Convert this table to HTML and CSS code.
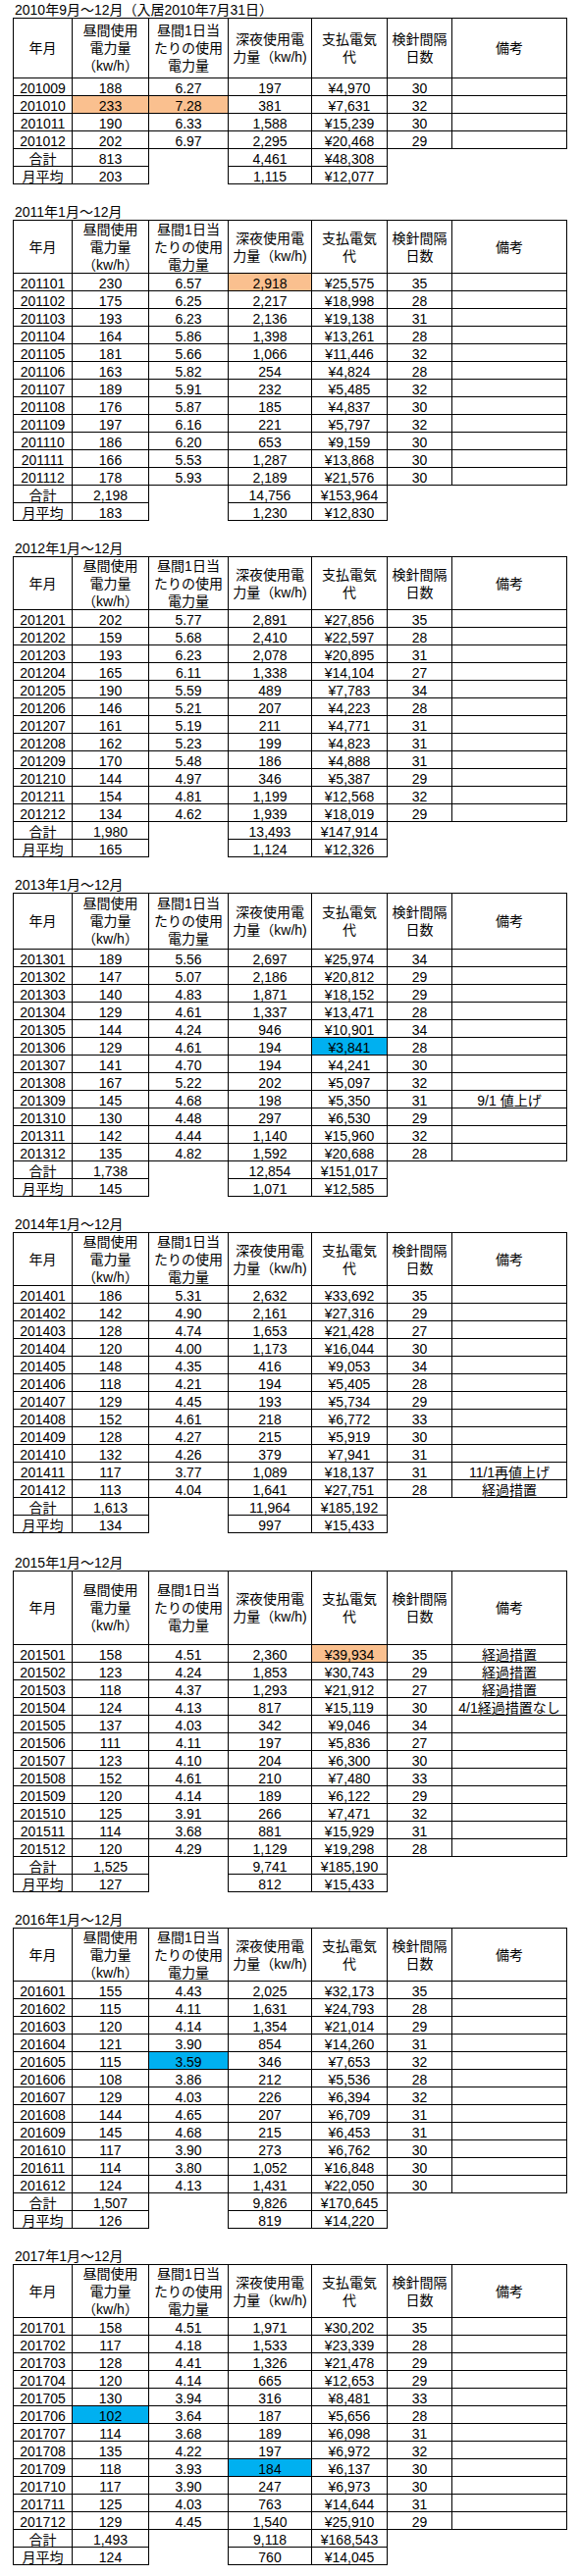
FILE: index.html
```html
<!DOCTYPE html>
<html lang="ja">
<head>
<meta charset="utf-8">
<title>電力使用量</title>
<link rel="stylesheet" href="styles.css">
</head>
<body>
<div class="sheet">

<section class="block first">
<div class="title">2010年9月～12月（入居2010年7月31日）</div>
<div class="tbl">
<div class="row hdr h61"><div class="c">年月</div><div class="c">昼間使用<br>電力量<br>（kw/h）</div><div class="c">昼間1日当<br>たりの使用<br>電力量</div><div class="c">深夜使用電<br>力量（kw/h)</div><div class="c">支払電気<br>代</div><div class="c">検針間隔<br>日数</div><div class="c">備考</div></div>
<div class="row"><div class="c">201009</div><div class="c">188</div><div class="c">6.27</div><div class="c">197</div><div class="c">¥4,970</div><div class="c">30</div><div class="c"></div></div>
<div class="row"><div class="c">201010</div><div class="c hl-o">233</div><div class="c hl-o">7.28</div><div class="c">381</div><div class="c">¥7,631</div><div class="c">32</div><div class="c"></div></div>
<div class="row"><div class="c">201011</div><div class="c">190</div><div class="c">6.33</div><div class="c">1,588</div><div class="c">¥15,239</div><div class="c">30</div><div class="c"></div></div>
<div class="row"><div class="c">201012</div><div class="c">202</div><div class="c">6.97</div><div class="c">2,295</div><div class="c">¥20,468</div><div class="c">29</div><div class="c"></div></div>
<div class="row sum"><div class="c">合計</div><div class="c">813</div><div class="c blank"></div><div class="c">4,461</div><div class="c">¥48,308</div></div>
<div class="row sum"><div class="c">月平均</div><div class="c">203</div><div class="c blank"></div><div class="c">1,115</div><div class="c">¥12,077</div></div>
</div>
</section>

<section class="block">
<div class="title">2011年1月～12月</div>
<div class="tbl">
<div class="row hdr h54"><div class="c">年月</div><div class="c">昼間使用<br>電力量<br>（kw/h）</div><div class="c">昼間1日当<br>たりの使用<br>電力量</div><div class="c">深夜使用電<br>力量（kw/h)</div><div class="c">支払電気<br>代</div><div class="c">検針間隔<br>日数</div><div class="c">備考</div></div>
<div class="row"><div class="c">201101</div><div class="c">230</div><div class="c">6.57</div><div class="c hl-o">2,918</div><div class="c">¥25,575</div><div class="c">35</div><div class="c"></div></div>
<div class="row"><div class="c">201102</div><div class="c">175</div><div class="c">6.25</div><div class="c">2,217</div><div class="c">¥18,998</div><div class="c">28</div><div class="c"></div></div>
<div class="row"><div class="c">201103</div><div class="c">193</div><div class="c">6.23</div><div class="c">2,136</div><div class="c">¥19,138</div><div class="c">31</div><div class="c"></div></div>
<div class="row"><div class="c">201104</div><div class="c">164</div><div class="c">5.86</div><div class="c">1,398</div><div class="c">¥13,261</div><div class="c">28</div><div class="c"></div></div>
<div class="row"><div class="c">201105</div><div class="c">181</div><div class="c">5.66</div><div class="c">1,066</div><div class="c">¥11,446</div><div class="c">32</div><div class="c"></div></div>
<div class="row"><div class="c">201106</div><div class="c">163</div><div class="c">5.82</div><div class="c">254</div><div class="c">¥4,824</div><div class="c">28</div><div class="c"></div></div>
<div class="row"><div class="c">201107</div><div class="c">189</div><div class="c">5.91</div><div class="c">232</div><div class="c">¥5,485</div><div class="c">32</div><div class="c"></div></div>
<div class="row"><div class="c">201108</div><div class="c">176</div><div class="c">5.87</div><div class="c">185</div><div class="c">¥4,837</div><div class="c">30</div><div class="c"></div></div>
<div class="row"><div class="c">201109</div><div class="c">197</div><div class="c">6.16</div><div class="c">221</div><div class="c">¥5,797</div><div class="c">32</div><div class="c"></div></div>
<div class="row"><div class="c">201110</div><div class="c">186</div><div class="c">6.20</div><div class="c">653</div><div class="c">¥9,159</div><div class="c">30</div><div class="c"></div></div>
<div class="row"><div class="c">201111</div><div class="c">166</div><div class="c">5.53</div><div class="c">1,287</div><div class="c">¥13,868</div><div class="c">30</div><div class="c"></div></div>
<div class="row"><div class="c">201112</div><div class="c">178</div><div class="c">5.93</div><div class="c">2,189</div><div class="c">¥21,576</div><div class="c">30</div><div class="c"></div></div>
<div class="row sum"><div class="c">合計</div><div class="c">2,198</div><div class="c blank"></div><div class="c">14,756</div><div class="c">¥153,964</div></div>
<div class="row sum"><div class="c">月平均</div><div class="c">183</div><div class="c blank"></div><div class="c">1,230</div><div class="c">¥12,830</div></div>
</div>
</section>

<section class="block">
<div class="title">2012年1月～12月</div>
<div class="tbl">
<div class="row hdr h54"><div class="c">年月</div><div class="c">昼間使用<br>電力量<br>（kw/h）</div><div class="c">昼間1日当<br>たりの使用<br>電力量</div><div class="c">深夜使用電<br>力量（kw/h)</div><div class="c">支払電気<br>代</div><div class="c">検針間隔<br>日数</div><div class="c">備考</div></div>
<div class="row"><div class="c">201201</div><div class="c">202</div><div class="c">5.77</div><div class="c">2,891</div><div class="c">¥27,856</div><div class="c">35</div><div class="c"></div></div>
<div class="row"><div class="c">201202</div><div class="c">159</div><div class="c">5.68</div><div class="c">2,410</div><div class="c">¥22,597</div><div class="c">28</div><div class="c"></div></div>
<div class="row"><div class="c">201203</div><div class="c">193</div><div class="c">6.23</div><div class="c">2,078</div><div class="c">¥20,895</div><div class="c">31</div><div class="c"></div></div>
<div class="row"><div class="c">201204</div><div class="c">165</div><div class="c">6.11</div><div class="c">1,338</div><div class="c">¥14,104</div><div class="c">27</div><div class="c"></div></div>
<div class="row"><div class="c">201205</div><div class="c">190</div><div class="c">5.59</div><div class="c">489</div><div class="c">¥7,783</div><div class="c">34</div><div class="c"></div></div>
<div class="row"><div class="c">201206</div><div class="c">146</div><div class="c">5.21</div><div class="c">207</div><div class="c">¥4,223</div><div class="c">28</div><div class="c"></div></div>
<div class="row"><div class="c">201207</div><div class="c">161</div><div class="c">5.19</div><div class="c">211</div><div class="c">¥4,771</div><div class="c">31</div><div class="c"></div></div>
<div class="row"><div class="c">201208</div><div class="c">162</div><div class="c">5.23</div><div class="c">199</div><div class="c">¥4,823</div><div class="c">31</div><div class="c"></div></div>
<div class="row"><div class="c">201209</div><div class="c">170</div><div class="c">5.48</div><div class="c">186</div><div class="c">¥4,888</div><div class="c">31</div><div class="c"></div></div>
<div class="row"><div class="c">201210</div><div class="c">144</div><div class="c">4.97</div><div class="c">346</div><div class="c">¥5,387</div><div class="c">29</div><div class="c"></div></div>
<div class="row"><div class="c">201211</div><div class="c">154</div><div class="c">4.81</div><div class="c">1,199</div><div class="c">¥12,568</div><div class="c">32</div><div class="c"></div></div>
<div class="row"><div class="c">201212</div><div class="c">134</div><div class="c">4.62</div><div class="c">1,939</div><div class="c">¥18,019</div><div class="c">29</div><div class="c"></div></div>
<div class="row sum"><div class="c">合計</div><div class="c">1,980</div><div class="c blank"></div><div class="c">13,493</div><div class="c">¥147,914</div></div>
<div class="row sum"><div class="c">月平均</div><div class="c">165</div><div class="c blank"></div><div class="c">1,124</div><div class="c">¥12,326</div></div>
</div>
</section>

<section class="block">
<div class="title">2013年1月～12月</div>
<div class="tbl">
<div class="row hdr h57"><div class="c">年月</div><div class="c">昼間使用<br>電力量<br>（kw/h）</div><div class="c">昼間1日当<br>たりの使用<br>電力量</div><div class="c">深夜使用電<br>力量（kw/h)</div><div class="c">支払電気<br>代</div><div class="c">検針間隔<br>日数</div><div class="c">備考</div></div>
<div class="row"><div class="c">201301</div><div class="c">189</div><div class="c">5.56</div><div class="c">2,697</div><div class="c">¥25,974</div><div class="c">34</div><div class="c"></div></div>
<div class="row"><div class="c">201302</div><div class="c">147</div><div class="c">5.07</div><div class="c">2,186</div><div class="c">¥20,812</div><div class="c">29</div><div class="c"></div></div>
<div class="row"><div class="c">201303</div><div class="c">140</div><div class="c">4.83</div><div class="c">1,871</div><div class="c">¥18,152</div><div class="c">29</div><div class="c"></div></div>
<div class="row"><div class="c">201304</div><div class="c">129</div><div class="c">4.61</div><div class="c">1,337</div><div class="c">¥13,471</div><div class="c">28</div><div class="c"></div></div>
<div class="row"><div class="c">201305</div><div class="c">144</div><div class="c">4.24</div><div class="c">946</div><div class="c">¥10,901</div><div class="c">34</div><div class="c"></div></div>
<div class="row"><div class="c">201306</div><div class="c">129</div><div class="c">4.61</div><div class="c">194</div><div class="c hl-b">¥3,841</div><div class="c">28</div><div class="c"></div></div>
<div class="row"><div class="c">201307</div><div class="c">141</div><div class="c">4.70</div><div class="c">194</div><div class="c">¥4,241</div><div class="c">30</div><div class="c"></div></div>
<div class="row"><div class="c">201308</div><div class="c">167</div><div class="c">5.22</div><div class="c">202</div><div class="c">¥5,097</div><div class="c">32</div><div class="c"></div></div>
<div class="row"><div class="c">201309</div><div class="c">145</div><div class="c">4.68</div><div class="c">198</div><div class="c">¥5,350</div><div class="c">31</div><div class="c">9/1 値上げ</div></div>
<div class="row"><div class="c">201310</div><div class="c">130</div><div class="c">4.48</div><div class="c">297</div><div class="c">¥6,530</div><div class="c">29</div><div class="c"></div></div>
<div class="row"><div class="c">201311</div><div class="c">142</div><div class="c">4.44</div><div class="c">1,140</div><div class="c">¥15,960</div><div class="c">32</div><div class="c"></div></div>
<div class="row"><div class="c">201312</div><div class="c">135</div><div class="c">4.82</div><div class="c">1,592</div><div class="c">¥20,688</div><div class="c">28</div><div class="c"></div></div>
<div class="row sum"><div class="c">合計</div><div class="c">1,738</div><div class="c blank"></div><div class="c">12,854</div><div class="c">¥151,017</div></div>
<div class="row sum"><div class="c">月平均</div><div class="c">145</div><div class="c blank"></div><div class="c">1,071</div><div class="c">¥12,585</div></div>
</div>
</section>

<section class="block">
<div class="title">2014年1月～12月</div>
<div class="tbl">
<div class="row hdr h54"><div class="c">年月</div><div class="c">昼間使用<br>電力量<br>（kw/h）</div><div class="c">昼間1日当<br>たりの使用<br>電力量</div><div class="c">深夜使用電<br>力量（kw/h)</div><div class="c">支払電気<br>代</div><div class="c">検針間隔<br>日数</div><div class="c">備考</div></div>
<div class="row"><div class="c">201401</div><div class="c">186</div><div class="c">5.31</div><div class="c">2,632</div><div class="c">¥33,692</div><div class="c">35</div><div class="c"></div></div>
<div class="row"><div class="c">201402</div><div class="c">142</div><div class="c">4.90</div><div class="c">2,161</div><div class="c">¥27,316</div><div class="c">29</div><div class="c"></div></div>
<div class="row"><div class="c">201403</div><div class="c">128</div><div class="c">4.74</div><div class="c">1,653</div><div class="c">¥21,428</div><div class="c">27</div><div class="c"></div></div>
<div class="row"><div class="c">201404</div><div class="c">120</div><div class="c">4.00</div><div class="c">1,173</div><div class="c">¥16,044</div><div class="c">30</div><div class="c"></div></div>
<div class="row"><div class="c">201405</div><div class="c">148</div><div class="c">4.35</div><div class="c">416</div><div class="c">¥9,053</div><div class="c">34</div><div class="c"></div></div>
<div class="row"><div class="c">201406</div><div class="c">118</div><div class="c">4.21</div><div class="c">194</div><div class="c">¥5,405</div><div class="c">28</div><div class="c"></div></div>
<div class="row"><div class="c">201407</div><div class="c">129</div><div class="c">4.45</div><div class="c">193</div><div class="c">¥5,734</div><div class="c">29</div><div class="c"></div></div>
<div class="row"><div class="c">201408</div><div class="c">152</div><div class="c">4.61</div><div class="c">218</div><div class="c">¥6,772</div><div class="c">33</div><div class="c"></div></div>
<div class="row"><div class="c">201409</div><div class="c">128</div><div class="c">4.27</div><div class="c">215</div><div class="c">¥5,919</div><div class="c">30</div><div class="c"></div></div>
<div class="row"><div class="c">201410</div><div class="c">132</div><div class="c">4.26</div><div class="c">379</div><div class="c">¥7,941</div><div class="c">31</div><div class="c"></div></div>
<div class="row"><div class="c">201411</div><div class="c">117</div><div class="c">3.77</div><div class="c">1,089</div><div class="c">¥18,137</div><div class="c">31</div><div class="c">11/1再値上げ</div></div>
<div class="row"><div class="c">201412</div><div class="c">113</div><div class="c">4.04</div><div class="c">1,641</div><div class="c">¥27,751</div><div class="c">28</div><div class="c">経過措置</div></div>
<div class="row sum"><div class="c">合計</div><div class="c">1,613</div><div class="c blank"></div><div class="c">11,964</div><div class="c">¥185,192</div></div>
<div class="row sum"><div class="c">月平均</div><div class="c">134</div><div class="c blank"></div><div class="c">997</div><div class="c">¥15,433</div></div>
</div>
</section>

<section class="block wide-gap">
<div class="title">2015年1月～12月</div>
<div class="tbl">
<div class="row hdr h75"><div class="c">年月</div><div class="c">昼間使用<br>電力量<br>（kw/h）</div><div class="c">昼間1日当<br>たりの使用<br>電力量</div><div class="c">深夜使用電<br>力量（kw/h)</div><div class="c">支払電気<br>代</div><div class="c">検針間隔<br>日数</div><div class="c">備考</div></div>
<div class="row"><div class="c">201501</div><div class="c">158</div><div class="c">4.51</div><div class="c">2,360</div><div class="c hl-o">¥39,934</div><div class="c">35</div><div class="c">経過措置</div></div>
<div class="row"><div class="c">201502</div><div class="c">123</div><div class="c">4.24</div><div class="c">1,853</div><div class="c">¥30,743</div><div class="c">29</div><div class="c">経過措置</div></div>
<div class="row"><div class="c">201503</div><div class="c">118</div><div class="c">4.37</div><div class="c">1,293</div><div class="c">¥21,912</div><div class="c">27</div><div class="c">経過措置</div></div>
<div class="row"><div class="c">201504</div><div class="c">124</div><div class="c">4.13</div><div class="c">817</div><div class="c">¥15,119</div><div class="c">30</div><div class="c">4/1経過措置なし</div></div>
<div class="row"><div class="c">201505</div><div class="c">137</div><div class="c">4.03</div><div class="c">342</div><div class="c">¥9,046</div><div class="c">34</div><div class="c"></div></div>
<div class="row"><div class="c">201506</div><div class="c">111</div><div class="c">4.11</div><div class="c">197</div><div class="c">¥5,836</div><div class="c">27</div><div class="c"></div></div>
<div class="row"><div class="c">201507</div><div class="c">123</div><div class="c">4.10</div><div class="c">204</div><div class="c">¥6,300</div><div class="c">30</div><div class="c"></div></div>
<div class="row"><div class="c">201508</div><div class="c">152</div><div class="c">4.61</div><div class="c">210</div><div class="c">¥7,480</div><div class="c">33</div><div class="c"></div></div>
<div class="row"><div class="c">201509</div><div class="c">120</div><div class="c">4.14</div><div class="c">189</div><div class="c">¥6,122</div><div class="c">29</div><div class="c"></div></div>
<div class="row"><div class="c">201510</div><div class="c">125</div><div class="c">3.91</div><div class="c">266</div><div class="c">¥7,471</div><div class="c">32</div><div class="c"></div></div>
<div class="row"><div class="c">201511</div><div class="c">114</div><div class="c">3.68</div><div class="c">881</div><div class="c">¥15,929</div><div class="c">31</div><div class="c"></div></div>
<div class="row"><div class="c">201512</div><div class="c">120</div><div class="c">4.29</div><div class="c">1,129</div><div class="c">¥19,298</div><div class="c">28</div><div class="c"></div></div>
<div class="row sum"><div class="c">合計</div><div class="c">1,525</div><div class="c blank"></div><div class="c">9,741</div><div class="c">¥185,190</div></div>
<div class="row sum"><div class="c">月平均</div><div class="c">127</div><div class="c blank"></div><div class="c">812</div><div class="c">¥15,433</div></div>
</div>
</section>

<section class="block">
<div class="title">2016年1月～12月</div>
<div class="tbl">
<div class="row hdr h54"><div class="c">年月</div><div class="c">昼間使用<br>電力量<br>（kw/h）</div><div class="c">昼間1日当<br>たりの使用<br>電力量</div><div class="c">深夜使用電<br>力量（kw/h)</div><div class="c">支払電気<br>代</div><div class="c">検針間隔<br>日数</div><div class="c">備考</div></div>
<div class="row"><div class="c">201601</div><div class="c">155</div><div class="c">4.43</div><div class="c">2,025</div><div class="c">¥32,173</div><div class="c">35</div><div class="c"></div></div>
<div class="row"><div class="c">201602</div><div class="c">115</div><div class="c">4.11</div><div class="c">1,631</div><div class="c">¥24,793</div><div class="c">28</div><div class="c"></div></div>
<div class="row"><div class="c">201603</div><div class="c">120</div><div class="c">4.14</div><div class="c">1,354</div><div class="c">¥21,014</div><div class="c">29</div><div class="c"></div></div>
<div class="row"><div class="c">201604</div><div class="c">121</div><div class="c">3.90</div><div class="c">854</div><div class="c">¥14,260</div><div class="c">31</div><div class="c"></div></div>
<div class="row"><div class="c">201605</div><div class="c">115</div><div class="c hl-b">3.59</div><div class="c">346</div><div class="c">¥7,653</div><div class="c">32</div><div class="c"></div></div>
<div class="row"><div class="c">201606</div><div class="c">108</div><div class="c">3.86</div><div class="c">212</div><div class="c">¥5,536</div><div class="c">28</div><div class="c"></div></div>
<div class="row"><div class="c">201607</div><div class="c">129</div><div class="c">4.03</div><div class="c">226</div><div class="c">¥6,394</div><div class="c">32</div><div class="c"></div></div>
<div class="row"><div class="c">201608</div><div class="c">144</div><div class="c">4.65</div><div class="c">207</div><div class="c">¥6,709</div><div class="c">31</div><div class="c"></div></div>
<div class="row"><div class="c">201609</div><div class="c">145</div><div class="c">4.68</div><div class="c">215</div><div class="c">¥6,453</div><div class="c">31</div><div class="c"></div></div>
<div class="row"><div class="c">201610</div><div class="c">117</div><div class="c">3.90</div><div class="c">273</div><div class="c">¥6,762</div><div class="c">30</div><div class="c"></div></div>
<div class="row"><div class="c">201611</div><div class="c">114</div><div class="c">3.80</div><div class="c">1,052</div><div class="c">¥16,848</div><div class="c">30</div><div class="c"></div></div>
<div class="row"><div class="c">201612</div><div class="c">124</div><div class="c">4.13</div><div class="c">1,431</div><div class="c">¥22,050</div><div class="c">30</div><div class="c"></div></div>
<div class="row sum"><div class="c">合計</div><div class="c">1,507</div><div class="c blank"></div><div class="c">9,826</div><div class="c">¥170,645</div></div>
<div class="row sum"><div class="c">月平均</div><div class="c">126</div><div class="c blank"></div><div class="c">819</div><div class="c">¥14,220</div></div>
</div>
</section>

<section class="block">
<div class="title">2017年1月～12月</div>
<div class="tbl">
<div class="row hdr h54"><div class="c">年月</div><div class="c">昼間使用<br>電力量<br>（kw/h）</div><div class="c">昼間1日当<br>たりの使用<br>電力量</div><div class="c">深夜使用電<br>力量（kw/h)</div><div class="c">支払電気<br>代</div><div class="c">検針間隔<br>日数</div><div class="c">備考</div></div>
<div class="row"><div class="c">201701</div><div class="c">158</div><div class="c">4.51</div><div class="c">1,971</div><div class="c">¥30,202</div><div class="c">35</div><div class="c"></div></div>
<div class="row"><div class="c">201702</div><div class="c">117</div><div class="c">4.18</div><div class="c">1,533</div><div class="c">¥23,339</div><div class="c">28</div><div class="c"></div></div>
<div class="row"><div class="c">201703</div><div class="c">128</div><div class="c">4.41</div><div class="c">1,326</div><div class="c">¥21,478</div><div class="c">29</div><div class="c"></div></div>
<div class="row"><div class="c">201704</div><div class="c">120</div><div class="c">4.14</div><div class="c">665</div><div class="c">¥12,653</div><div class="c">29</div><div class="c"></div></div>
<div class="row"><div class="c">201705</div><div class="c">130</div><div class="c">3.94</div><div class="c">316</div><div class="c">¥8,481</div><div class="c">33</div><div class="c"></div></div>
<div class="row"><div class="c">201706</div><div class="c hl-b">102</div><div class="c">3.64</div><div class="c">187</div><div class="c">¥5,656</div><div class="c">28</div><div class="c"></div></div>
<div class="row"><div class="c">201707</div><div class="c">114</div><div class="c">3.68</div><div class="c">189</div><div class="c">¥6,098</div><div class="c">31</div><div class="c"></div></div>
<div class="row"><div class="c">201708</div><div class="c">135</div><div class="c">4.22</div><div class="c">197</div><div class="c">¥6,972</div><div class="c">32</div><div class="c"></div></div>
<div class="row"><div class="c">201709</div><div class="c">118</div><div class="c">3.93</div><div class="c hl-b">184</div><div class="c">¥6,137</div><div class="c">30</div><div class="c"></div></div>
<div class="row"><div class="c">201710</div><div class="c">117</div><div class="c">3.90</div><div class="c">247</div><div class="c">¥6,973</div><div class="c">30</div><div class="c"></div></div>
<div class="row"><div class="c">201711</div><div class="c">125</div><div class="c">4.03</div><div class="c">763</div><div class="c">¥14,644</div><div class="c">31</div><div class="c"></div></div>
<div class="row"><div class="c">201712</div><div class="c">129</div><div class="c">4.45</div><div class="c">1,540</div><div class="c">¥25,910</div><div class="c">29</div><div class="c"></div></div>
<div class="row sum"><div class="c">合計</div><div class="c">1,493</div><div class="c blank"></div><div class="c">9,118</div><div class="c">¥168,543</div></div>
<div class="row sum"><div class="c">月平均</div><div class="c">124</div><div class="c blank"></div><div class="c">760</div><div class="c">¥14,045</div></div>
</div>
</section>

</div>
</body>
</html>
```

FILE: styles.css
```css
html, body {
  margin: 0;
  padding: 0;
  background: #ffffff;
}

body {
  font-family: "Liberation Sans", "Noto Sans CJK JP", sans-serif;
  font-size: 14px;
  color: #000000;
}

.sheet {
  padding: 0 0 19px 13px;
}

.block {
  margin-top: 18px;
}

.block.first {
  margin-top: 0;
}

.block.wide-gap {
  margin-top: 20px;
}

.title {
  box-sizing: border-box;
  height: 18px;
  padding: 3px 0 0 2px;
  line-height: 14px;
  white-space: nowrap;
}

.tbl {
  display: flex;
  flex-direction: column;
}

.row {
  display: grid;
  grid-template-columns: 61px 78px 81px 85px 77px 66px 117px;
}

.c {
  box-sizing: border-box;
  height: 18px;
  border-right: 1px solid #000000;
  border-bottom: 1px solid #000000;
  padding-top: 3px;
  line-height: 14px;
  text-align: center;
  white-space: nowrap;
  overflow: hidden;
}

.c:first-child {
  border-left: 1px solid #000000;
}

.hdr .c {
  border-top: 1px solid #000000;
  padding: 0;
  line-height: 18px;
  display: flex;
  align-items: center;
  justify-content: center;
}

.h54 .c { height: 55px; }
.h57 .c { height: 58px; }
.h61 .c { height: 62px; }
.h75 .c { height: 76px; }

.sum .blank {
  border-bottom: none;
}

.hl-o {
  background: #fac08f;
}

.hl-b {
  background: #00b0f0;
}
```
